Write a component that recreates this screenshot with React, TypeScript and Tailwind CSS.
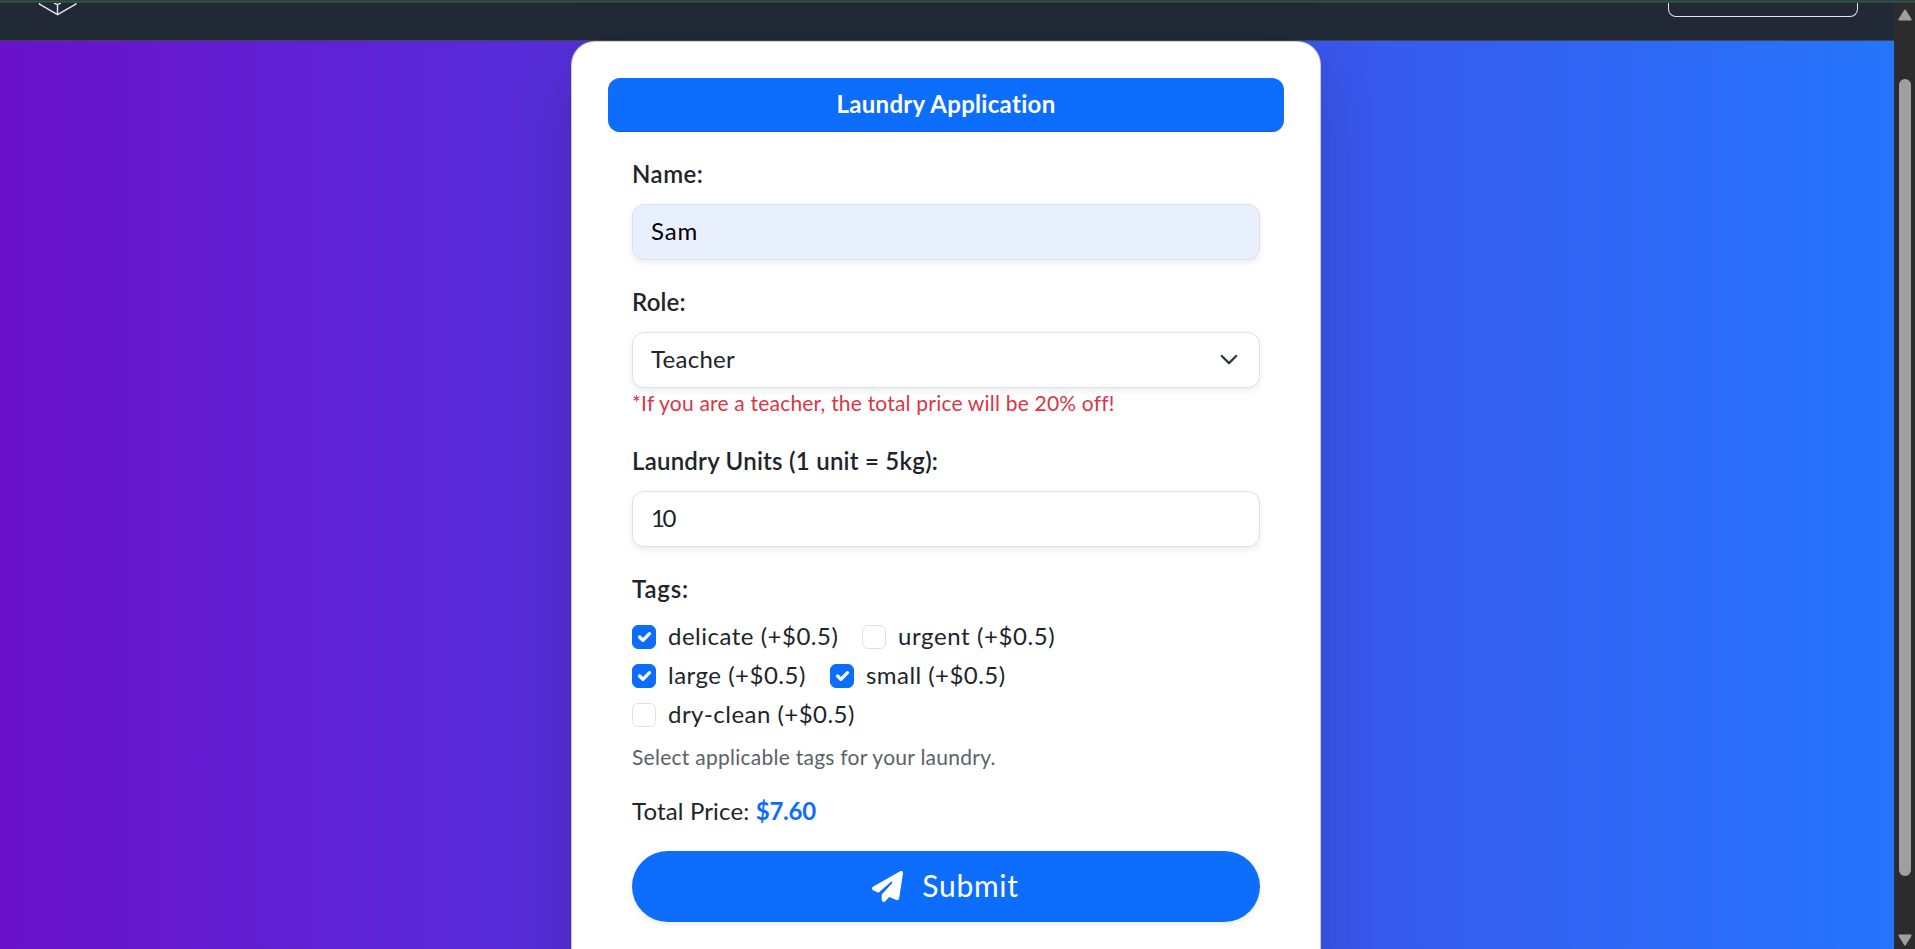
import React from 'react';
import { FaPaperPlane } from 'react-icons/fa6';

const labelCls = 'block h-9 leading-9 mb-3 font-semibold whitespace-nowrap';
const fieldCls =
  'block w-full h-14 rounded-xl border border-[#dee2e6] pl-[18px] pr-[18px] text-2xl shadow-[0_3px_6px_rgba(0,0,0,0.075)] outline-none appearance-none';

function Tag({ label, checked, width, tracking }: { label: string; checked?: boolean; width: string; tracking: string }) {
  return (
    <label className={`flex h-9 items-center ${width}`}>
      <span
        className={`mr-3 flex size-6 shrink-0 items-center justify-center rounded-md border ${
          checked ? 'border-[#0d6efd] bg-[#0d6efd]' : 'border-[#dee2e6] bg-white'
        }`}
      >
        {checked && (
          <svg viewBox="0 0 20 20" className="size-[22px] shrink-0" fill="none" stroke="#fff" strokeWidth="3" strokeLinecap="round" strokeLinejoin="round">
            <path d="m6 10 3 3 6-6" />
          </svg>
        )}
      </span>
      <span className={`h-9 leading-[34px] whitespace-nowrap ${tracking}`}>{label}</span>
    </label>
  );
}

function Navbar() {
  return (
    <header className="flex h-[38px] shrink-0 items-start justify-between border-b border-[#414750] bg-[#212937] pl-[38px] pr-9">
      <svg width="40" height="14" viewBox="0 0 40 14" fill="none" stroke="#e5e7eb" strokeWidth="1.4">
        <path d="M1.5 0V1.2L19.5 11.6L37.8 1.2V0" />
        <path d="M16 0L19.5 1.6L23 0M19.5 1.6V11.6" />
      </svg>
      <div className="h-[14px] w-[190px] rounded-b-lg border border-t-0 border-[#e5e7eb]" />
    </header>
  );
}

function Scrollbar() {
  return (
    <aside className="flex w-[21px] shrink-0 flex-col items-center bg-[#2c2c2c] pt-[6px] pb-[3px]">
      <svg width="14" height="12" viewBox="0 0 14 12" fill="#9f9f9f" stroke="#9f9f9f" strokeWidth="2" strokeLinejoin="round">
        <path d="M7 1.5L12.6 10.6H1.4Z" />
      </svg>
      <div className="mt-[58px] h-[797px] w-3 rounded-full bg-[#9f9f9f]" />
      <svg className="mt-auto" width="14" height="12" viewBox="0 0 14 12" fill="#9f9f9f" stroke="#9f9f9f" strokeWidth="2" strokeLinejoin="round">
        <path d="M7 10.4L12.6 1.4H1.4Z" />
      </svg>
    </aside>
  );
}

export default function App() {
  return (
    <div className="flex h-[949px] w-full flex-col overflow-hidden font-['Lato',sans-serif] text-2xl text-[#212529]">
      <div className="h-[3px] shrink-0 border-y border-[#2b403d] bg-[#35574a]" />
      <div className="flex h-[946px]">
        <div className="flex min-w-0 flex-1 flex-col overflow-hidden">
          <Navbar />
          <main className="flex h-[908px] shrink-0 items-start justify-center bg-[linear-gradient(to_right,#6a11cb,#2575fc)] pr-[2px]">
            <section className="h-[1010px] w-[750px] shrink-0 rounded-3xl border border-black/20 bg-white px-9 pt-9 shadow-[0_24px_72px_rgba(0,0,0,0.175)]">
              <h1 className="h-[54px] rounded-xl border-b border-[#0b5cd4] bg-[#0d6efd] text-center font-bold leading-[52px] tracking-[0.3px] text-white">
                Laundry Application
              </h1>
              <form className="px-6 pt-6">
                <div className="mb-6">
                  <label className={`${labelCls} tracking-[0.5px]`}>Name:</label>
                  <input className={`${fieldCls} bg-[#e8f0fe] pb-[3px] tracking-[0.9px] text-black`} defaultValue="Sam" />
                </div>
                <div>
                  <label className={`${labelCls} tracking-[0.2px]`}>Role:</label>
                  <div className={`${fieldCls} flex items-center justify-between bg-white pb-[2px]`}>
                    <span className="tracking-[0.27px]">Teacher</span>
                    <svg width="24" height="18" viewBox="0 0 16 12" fill="none" stroke="#343a40" strokeWidth="1.6" strokeLinecap="round" strokeLinejoin="round">
                      <path d="M3.2 4l4.8 4.8L12.8 4" />
                    </svg>
                  </div>
                  <p className="mb-6 h-[31px] whitespace-nowrap text-[21px] leading-[30px] tracking-[0.2px] text-[#dc3545]">
                    *If you are a teacher, the total price will be 20% off!
                  </p>
                </div>
                <div className="mb-6">
                  <label className={`${labelCls} tracking-[0.24px]`}>Laundry Units (1 unit = 5kg):</label>
                  <input className={`${fieldCls} bg-white pb-[3px] tracking-[-2.5px]`} defaultValue="10" />
                </div>
                <label className={`${labelCls} tracking-[0.8px]`}>Tags:</label>
                <div className="flex flex-col gap-[3px]">
                  <div className="flex">
                    <Tag label="delicate (+$0.5)" checked width="w-[230px]" tracking="tracking-[0.5px]" />
                    <Tag label="urgent (+$0.5)" width="w-[200px]" tracking="tracking-[0.6px]" />
                  </div>
                  <div className="flex">
                    <Tag label="large (+$0.5)" checked width="w-[198px]" tracking="tracking-[0.5px]" />
                    <Tag label="small (+$0.5)" checked width="w-[200px]" tracking="tracking-[0.45px]" />
                  </div>
                  <Tag label="dry-clean (+$0.5)" width="w-[240px]" tracking="tracking-[0.47px]" />
                </div>
                <p className="mt-[9px] h-8 text-[21px] leading-[30px] tracking-[0.26px] text-[#5b6268]">
                  Select applicable tags for your laundry.
                </p>
                <p className="mt-[19px] h-9 whitespace-nowrap leading-9 tracking-[0.15px]">
                  Total Price: <strong className="font-bold tracking-[-0.2px] text-[#0d6efd]">$7.60</strong>
                </p>
                <button
                  type="button"
                  className="mt-[22px] flex h-[71px] w-full items-center justify-center rounded-full bg-[#0d6efd] text-[30px] text-white shadow-[0_3px_6px_rgba(0,0,0,0.075)]"
                >
                  <FaPaperPlane className="mr-[19px] size-[31px]" />
                  <span className="pb-px pr-px tracking-[0.7px]">Submit</span>
                </button>
              </form>
            </section>
          </main>
        </div>
        <Scrollbar />
      </div>
    </div>
  );
}
